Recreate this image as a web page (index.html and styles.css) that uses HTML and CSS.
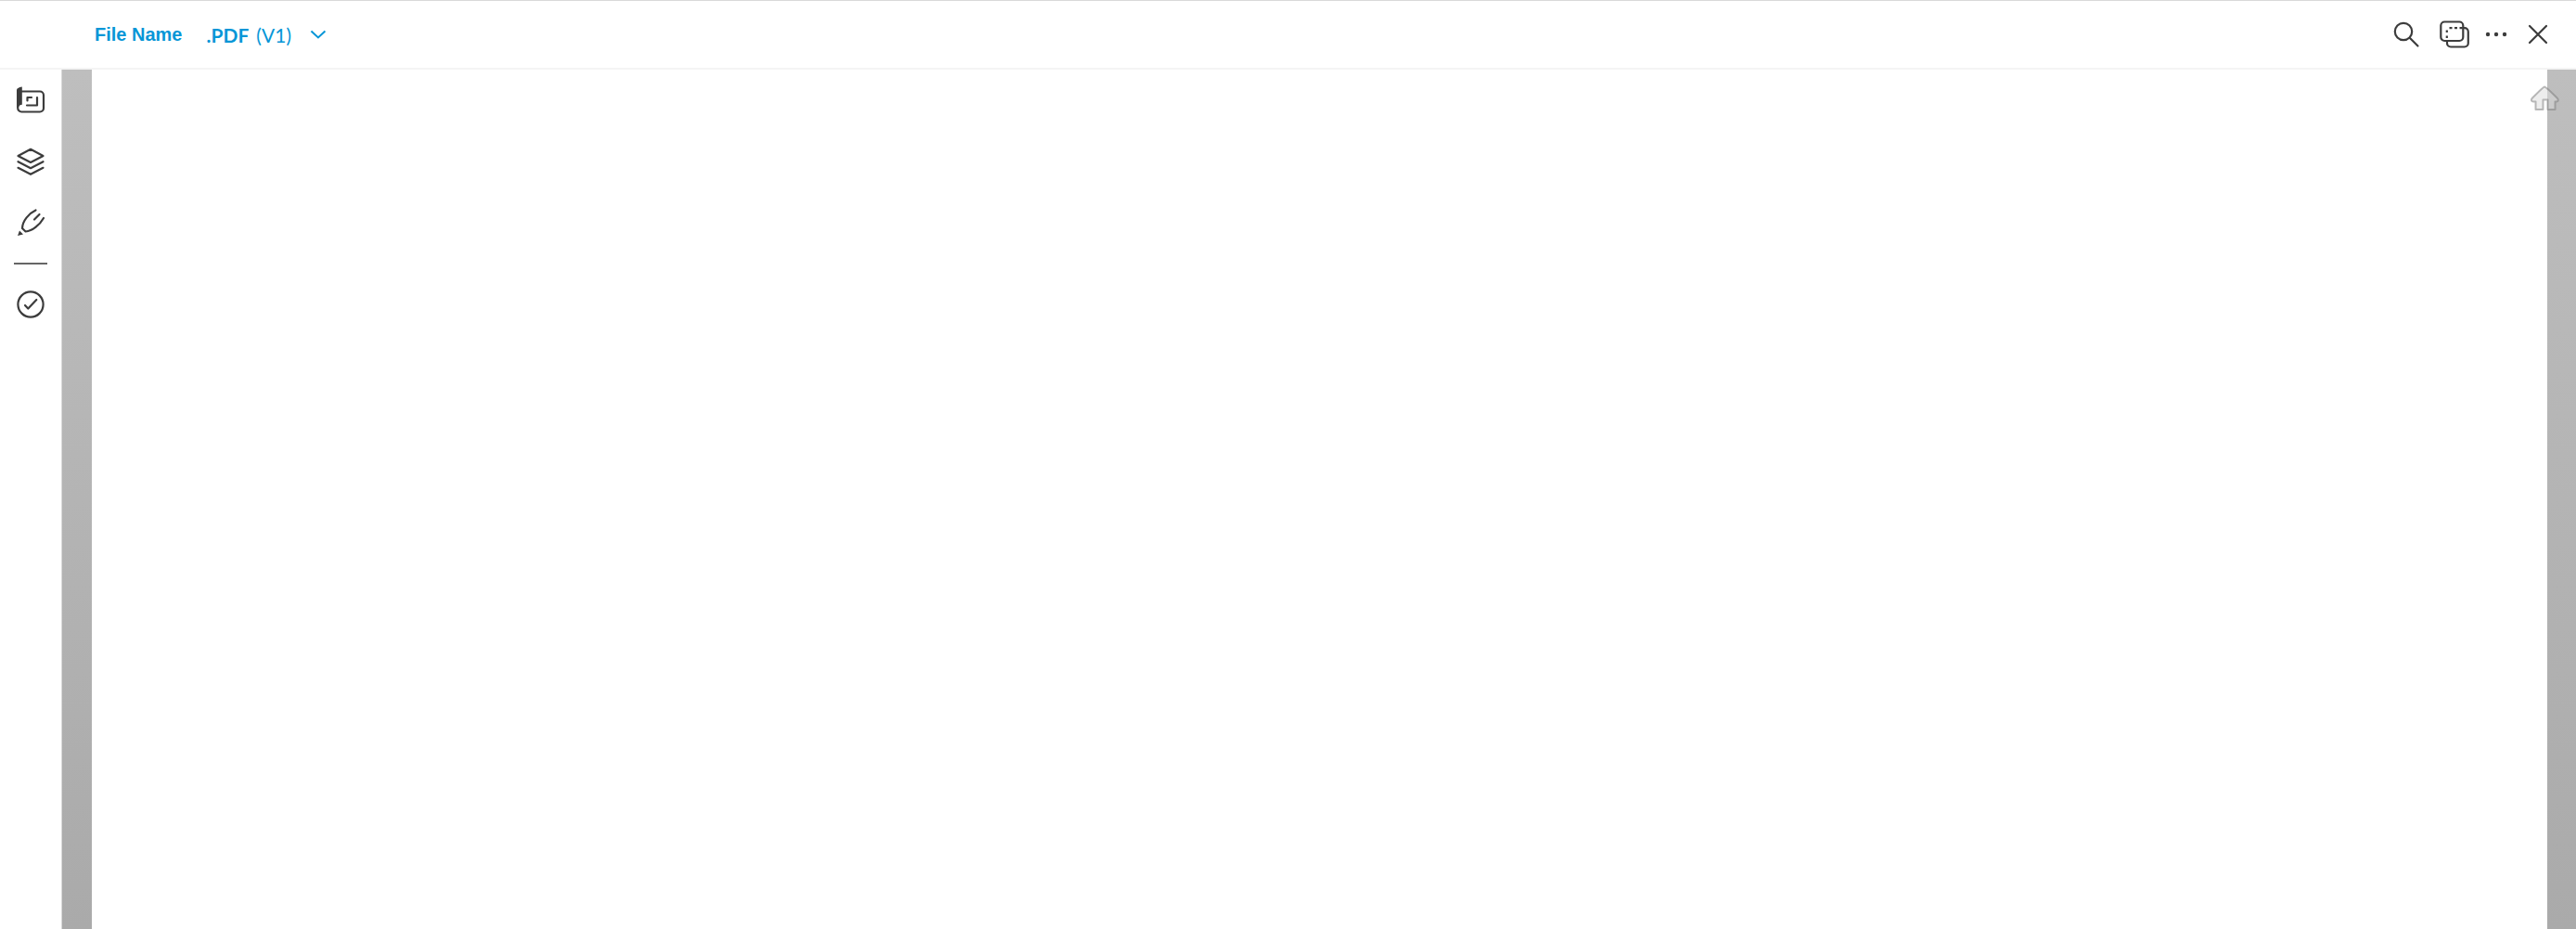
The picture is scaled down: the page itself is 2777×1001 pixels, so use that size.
FILE: index.html
```html
<!DOCTYPE html>
<html lang="en">
<head>
    <meta charset="UTF-8">
    <meta name="viewport" content="width=device-width, initial-scale=1.0">
    <title>File Name</title>
    <link rel="stylesheet" href="styles.css">
</head>
<body>
    <header class="topbar">
      <h1 class="file-name">File Name</h1>
      <button class="version" type="button">
        <span class="version-type">.PDF</span>
        <span class="version-number">(V1)</span>
        <svg class="chevron" viewBox="0 0 18 18"><path d="M1.500 5.500l7.500 7 7.500-7"/></svg>
      </button>
      <div class="actions">
        <button class="action action-search" type="button" aria-label="Search">
          <svg class="icon" viewBox="0 0 32 32"><circle cx="13" cy="13" r="9.200"/><path d="M20 20l8.500 8.500"/></svg>
        </button>
        <button class="action" type="button" aria-label="Compare">
          <svg class="icon" viewBox="0 0 32 32">
            <rect x="1.300" y="2.500" width="24" height="20.500" rx="4"/>
            <path d="M25.300 9.200h1.500a4 4 0 0 1 4 4v12.300a4 4 0 0 1-4 4H12a4 4 0 0 1-4-4V23"/>
            <path class="dash" d="M10.500 9.200h3M16 9.200h3M21.500 9.200h3M7.800 11.500v2.500M7.800 17.500v2.500"/>
          </svg>
        </button>
        <button class="action" type="button" aria-label="More">
          <svg class="icon icon-fill" viewBox="0 0 32 32"><circle cx="7" cy="16" r="2.200"/><circle cx="16" cy="16" r="2.200"/><circle cx="25" cy="16" r="2.200"/></svg>
        </button>
        <button class="action" type="button" aria-label="Close">
          <svg class="icon" viewBox="0 0 32 32"><path d="M7 7l18 18M25 7L7 25"/></svg>
        </button>
      </div>
    </header>
    <div class="viewer">
      <nav class="sidebar">
        <button class="tool" type="button" aria-label="Sheets">
          <svg class="icon" viewBox="0 0 32 32">
            <path d="M6 6.500h20a4 4 0 0 1 4 4V24.500a4 4 0 0 1-4 4H6.200a4 4 0 0 1-4-4V6"/>
            <path class="solid" d="M1 5q0-2.500 5.800-3.500v19.300q-3 0-3.800 3H1z"/>
            <path d="M12.500 16.500v-3.500H17M23 13v8.500H12"/>
          </svg>
        </button>
        <button class="tool" type="button" aria-label="Layers">
          <svg class="icon" viewBox="0 0 32 32"><path d="M16 2.800l13.500 7.200L16 17 2.500 10zM2.500 16.200L16 23.200l13.500-7M2.500 22.800L16 29.800l13.500-7"/></svg>
        </button>
        <button class="tool" type="button" aria-label="Markup">
          <svg class="icon" viewBox="0 0 32 32">
            <path d="M21.500 2.500C14 6 7.200 14 7 22l3.600 3.500C18 25 26 18 30 11M20 12.500l5.500-5.500"/>
            <path class="solid" d="M4 24.500l4 4L2 30z"/>
          </svg>
        </button>
        <hr class="divider">
        <button class="tool" type="button" aria-label="Issues">
          <svg class="icon" viewBox="0 0 32 32"><circle cx="16" cy="16" r="13.600"/><path d="M10 17l3.300 3.500 9-9.500"/></svg>
        </button>
      </nav>
      <main class="canvas">
        <div class="sheet"></div>
        <button class="home" type="button" aria-label="Home">
          <svg class="home-icon" viewBox="0 0 32 28"><path d="M16 1.500c1 0 9 7.500 13.500 12 2 2 1.300 4-.500 4h-1.500V26h-8V15.500h-5V26h-8v-8.500H4c-2 0-3-2-1-4C7 9.500 15 1.500 16 1.500z"/></svg>
        </button>
      </main>
    </div>
</body>
</html>
```
FILE: styles.css
```css
* {
  box-sizing: border-box;
}

body {
  display: flex;
  flex-direction: column;
  min-height: 100vh;
  margin: 0;
  background-color: #fff;
  font-family: "Liberation Sans", Arial, sans-serif;
}

button {
  margin: 0;
  padding: 0;
  border: 0;
  background: none;
  cursor: pointer;
}

svg {
  display: block;
}

.topbar {
  display: flex;
  align-items: center;
  height: 75px;
  padding: 0 25px 0 102px;
  border-top: 1px solid #d9d9d9;
  border-bottom: 2px solid #f4f4f4;
}

.file-name {
  margin: 0 26px 0 0;
  color: #0696d7;
  font-size: 20px;
  font-weight: 700;
}

.version {
  display: flex;
  align-items: center;
  gap: 8px;
  color: #0696d7;
  font-family: Lato, sans-serif;
  font-size: 21px;
}

.version-type {
  font-weight: 700;
}

.version-number {
  font-weight: 400;
}

.chevron {
  width: 18px;
  height: 18px;
  margin-left: 12px;
  fill: none;
  stroke: #0696d7;
  stroke-width: 2;
}

.actions {
  display: flex;
  gap: 13px;
  margin-left: auto;
}

.action-search {
  margin-right: 7px;
}

.icon {
  width: 32px;
  height: 32px;
  fill: none;
  stroke: #3c3c3c;
  stroke-width: 2.2;
  stroke-linecap: round;
  stroke-linejoin: round;
}

.icon-fill {
  fill: #3c3c3c;
  stroke: none;
}

.dash {
  stroke-linecap: butt;
}

.solid {
  fill: #3c3c3c;
  stroke: none;
}

.viewer {
  display: flex;
  flex: 1;
}

.sidebar {
  display: flex;
  flex-direction: column;
  align-items: center;
  width: 67px;
  border-right: 1px solid #d9d9d9;
}

.tool {
  display: flex;
  align-items: center;
  justify-content: center;
  width: 100%;
  height: 66px;
}

.divider {
  width: 36px;
  height: 2px;
  margin: 10px 0;
  border: 0;
  background-color: #666;
}

.canvas {
  position: relative;
  display: flex;
  flex: 1;
  padding: 0 31px 0 32px;
  background: linear-gradient(#bebebe, #aaa);
}

.sheet {
  flex: 1;
  background-color: #fff;
}

/* floats over the edge of the sheet */
.home {
  position: absolute;
  top: 17px;
  right: 18px;
}

.home-icon {
  width: 32px;
  height: 28px;
  fill: rgba(220, 220, 220, 0.5);
  stroke: rgba(120, 120, 120, 0.5);
  stroke-width: 2;
  stroke-linejoin: round;
}
```
